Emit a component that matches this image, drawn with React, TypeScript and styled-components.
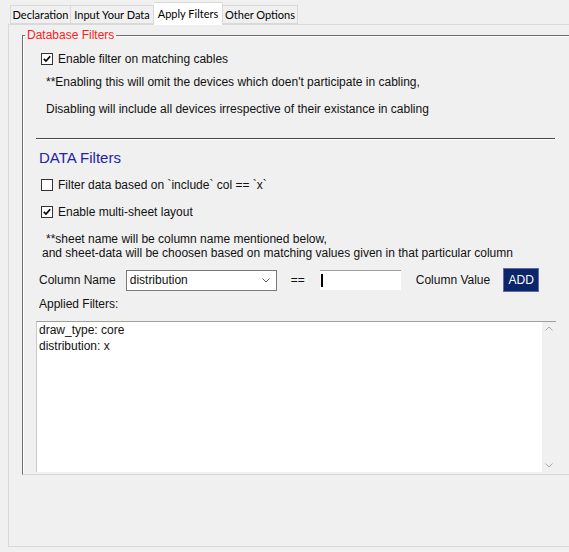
import React from 'react';
import styled, { createGlobalStyle } from 'styled-components';

const GlobalStyle = createGlobalStyle`
  html, body {
    margin: 0;
    padding: 0;
    background: #f0f0f0;
  }
`;

const Window = styled.div`
  width: 569px;
  height: 552px;
  overflow: hidden;
  background: #f0f0f0;
  font-family: "Liberation Sans", Arial, sans-serif;
  font-size: 12px;
  color: #111;
`;

const TabStrip = styled.div`
  height: 24px;
  padding-left: 10px;
  display: flex;
  align-items: flex-end;
`;

const Tab = styled.div<{ $active?: boolean; $width: number }>`
  position: relative;
  z-index: ${(p) => (p.$active ? 1 : 0)};
  box-sizing: border-box;
  width: ${(p) => p.$width}px;
  height: ${(p) => (p.$active ? 23 : 19)}px;
  margin-bottom: ${(p) => (p.$active ? -1 : 0)}px;
  display: flex;
  align-items: center;
  justify-content: center;
  padding-bottom: ${(p) => (p.$active ? 2 : 0)}px;

  background: ${(p) => (p.$active ? '#ffffff' : '#f0f0f0')};
  border: 1px solid #d9d9d9;
  border-bottom: ${(p) => (p.$active ? 'none' : '1px solid #d9d9d9')};
  border-left: none;

  font-family: Lato, "Noto Sans", sans-serif;
  font-size: 11px;
  color: #000;
  white-space: nowrap;

  &:first-child {
    border-left: 1px solid #d9d9d9;
  }
`;

const Panel = styled.div`
  box-sizing: border-box;
  width: 620px;
  height: 523px;
  margin-left: 8px;
  padding-top: 3px;
  border: 1px solid #d9d9d9;
`;

const Group = styled.fieldset`
  box-sizing: border-box;
  width: 600px;
  margin: 0 0 0 13px;
  padding: 0 0 2px 0;
  min-inline-size: 0;
  border: none;
  border-top: 1px solid #6e6e6e;
  border-left: 1px solid #6e6e6e;
  border-bottom: 1px solid #d7d7d7;
  box-shadow: inset 1px 1px 0 #ffffff;
`;

const Legend = styled.legend`
  margin-left: 2px;
  padding: 0 2px;
  line-height: 15px;
  font-size: 12px;
  color: #ff1a1a;
`;

const Content = styled.div`
  width: 533px;
  display: flex;
  flex-direction: column;
`;

const CheckRow = styled.label<{ $top: number }>`
  height: 20px;
  margin-top: ${(p) => p.$top}px;
  padding-left: 18px;
  display: flex;
  align-items: center;
  gap: 5px;
`;

const Box = styled.span`
  box-sizing: border-box;
  width: 12px;
  height: 12px;
  display: inline-flex;
  align-items: center;
  justify-content: center;
  background: #fff;
  border: 1px solid #333;
`;

const Line = styled.div<{ $top: number; $left: number }>`
  height: 16px;
  line-height: 16px;
  margin-top: ${(p) => p.$top}px;
  padding-left: ${(p) => p.$left}px;
  white-space: nowrap;
`;

const Separator = styled.div`
  margin: 21px 0 0 13px;
  width: 519px;
  height: 1px;
  background: #4a4a4a;
  border-bottom: 1px solid #ffffff;
`;

const SectionTitle = styled.div`
  height: 18px;
  line-height: 18px;
  margin-top: 9px;
  padding-left: 16px;
  font-size: 15px;
  color: #2323a6;
`;

const Notes = styled.div`
  margin-top: 10px;
  padding-left: 19px;
  line-height: 14px;
  white-space: nowrap;
`;

const NoteFirst = styled.div`
  padding-left: 4px;
`;

const FilterRow = styled.div`
  height: 24px;
  margin-top: 8px;
  padding-left: 16px;
  display: flex;
  align-items: center;
`;

const Label = styled.span<{ $gap?: number }>`
  margin-left: ${(p) => p.$gap ?? 0}px;
  white-space: nowrap;
`;

const Combo = styled.div`
  box-sizing: border-box;
  width: 151px;
  height: 21px;
  margin-left: 10px;
  padding: 0 6px 0 3px;
  display: flex;
  align-items: center;
  justify-content: space-between;
  background: #fff;
  border: 1px solid #7a7a7a;
`;

const TextInput = styled.div`
  box-sizing: border-box;
  width: 81px;
  height: 20px;
  margin-left: 15px;
  padding: 3px 0 3px 1px;
  display: flex;
  background: #fff;
  border-top: 1px solid #a0a0a0;
`;

const Caret = styled.span`
  width: 2px;
  height: 100%;
  background: #000;
`;

const AddButton = styled.button`
  box-sizing: border-box;
  width: 36px;
  height: 24px;
  margin-left: 13px;
  padding: 0;
  background: #0c2568;
  border: 1px solid #5a6ea8;
  color: #fff;
  font-family: "Liberation Sans", Arial, sans-serif;
  font-size: 12px;
`;

const AreaLabel = styled.div`
  height: 16px;
  line-height: 16px;
  margin-top: 4px;
  padding-left: 16px;
`;

const Area = styled.div`
  box-sizing: border-box;
  width: 520px;
  height: 151px;
  margin: 9px 0 0 13px;
  display: flex;
  border-top: 1px solid #a0a0a0;
  border-left: 1px solid #c8c8c8;
`;

const AreaText = styled.div`
  flex: 1;
  padding-left: 2px;
  background: #fff;
  line-height: 16px;
`;

const ScrollBar = styled.div`
  width: 14px;
  display: flex;
  flex-direction: column;
  justify-content: space-between;
  align-items: center;
  padding: 4px 0;
  background: #f0f0f0;
`;

function Check() {
  return (
    <svg width="8" height="8" viewBox="0 0 8 8">
      <path d="M0.8 3.8 L3 6 L7.2 1.2" fill="none" stroke="#000" strokeWidth="1.7" />
    </svg>
  );
}

function Checkbox({ checked }: { checked?: boolean }) {
  return <Box>{checked && <Check />}</Box>;
}

function Chevron({ up, color = '#606060' }: { up?: boolean; color?: string }) {
  return (
    <svg width="8" height="5" viewBox="0 0 8 5">
      <path
        d={up ? 'M0.5 4.5 L4 1 L7.5 4.5' : 'M0.5 0.5 L4 4 L7.5 0.5'}
        fill="none"
        stroke={color}
        strokeWidth="1"
      />
    </svg>
  );
}

const tabs = [
  { name: 'Declaration', width: 61 },
  { name: 'Input Your Data', width: 83 },
  { name: 'Apply Filters', width: 69, active: true },
  { name: 'Other Options', width: 75 },
];

export default function App() {
  return (
    <Window>
      <GlobalStyle />
      <TabStrip>
        {tabs.map((t) => (
          <Tab key={t.name} $width={t.width} $active={t.active}>
            {t.name}
          </Tab>
        ))}
      </TabStrip>

      <Panel>
        <Group>
          <Legend>Database Filters</Legend>
          <Content>
            <CheckRow $top={6}>
              <Checkbox checked />
              Enable filter on matching cables
            </CheckRow>
            <Line $top={5} $left={23}>
              **Enabling this will omit the devices which doen't participate in cabling,
            </Line>
            <Line $top={11} $left={23}>
              Disabling will include all devices irrespective of their existance in cabling
            </Line>

            <Separator />

            <SectionTitle>DATA Filters</SectionTitle>
            <CheckRow $top={8}>
              <Checkbox />
              Filter data based on `include` col == `x`
            </CheckRow>
            <CheckRow $top={7}>
              <Checkbox checked />
              Enable multi-sheet layout
            </CheckRow>

            <Notes>
              <NoteFirst>**sheet name will be column name mentioned below,</NoteFirst>
              <div>and sheet-data will be choosen based on matching values given in that particular column</div>
            </Notes>

            <FilterRow>
              <Label>Column Name</Label>
              <Combo>
                <span>distribution</span>
                <Chevron />
              </Combo>
              <Label $gap={14}>==</Label>
              <TextInput>
                <Caret />
              </TextInput>
              <Label $gap={15}>Column Value</Label>
              <AddButton>ADD</AddButton>
            </FilterRow>

            <AreaLabel>Applied Filters:</AreaLabel>
            <Area>
              <AreaText>
                <div>draw_type: core</div>
                <div>distribution: x</div>
              </AreaText>
              <ScrollBar>
                <Chevron up color="#a8a8a8" />
                <Chevron color="#a8a8a8" />
              </ScrollBar>
            </Area>
          </Content>
        </Group>
      </Panel>
    </Window>
  );
}
